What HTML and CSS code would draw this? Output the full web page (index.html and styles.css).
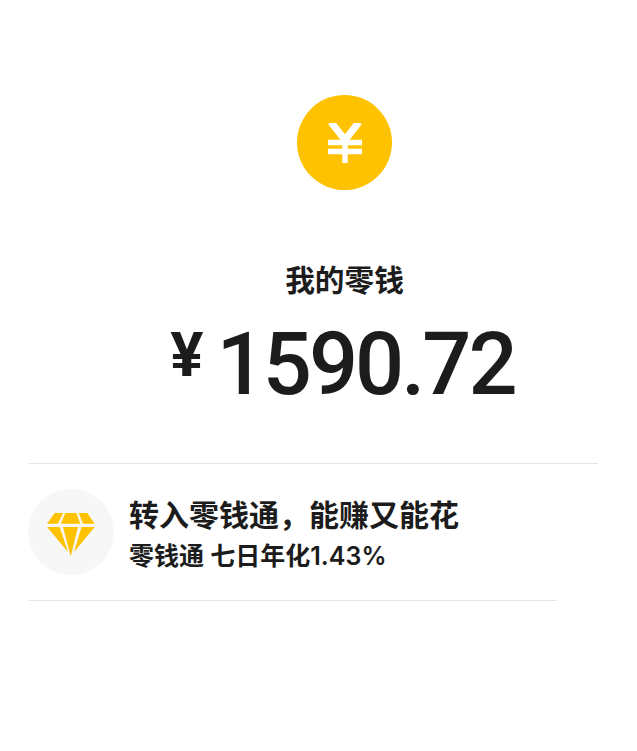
FILE: index.html
```html
<!DOCTYPE html>
<html lang="zh-CN">
<head>
    <meta charset="UTF-8">
    <meta name="viewport" content="width=device-width, initial-scale=1.0">
    <title>我的零钱</title>
    <link rel="stylesheet" href="styles.css">
</head>
<body>
    <div class="hero">
        <div class="coin">
            <svg width="34" height="40" viewBox="0 0 34 40">
                <path class="coin-arms" d="M3 -1 L17 17 L31 -1"/>
                <path class="coin-bars" d="M0 19.500 H34 M0 28.500 H34 M17 16 V40"/>
            </svg>
        </div>
        <h1 class="balance-title">我的零钱</h1>
        <div class="balance">
            <span class="currency">¥</span>
            <span class="amount">1590.72</span>
        </div>
    </div>

    <div class="promo">
        <div class="promo-icon">
            <svg class="gem-icon" width="48" height="44" viewBox="0 0 48 44">
                <path class="gem" d="M7.700 0 H16 L11 10.700 H0 Z"/>
                <path class="gem" d="M18.300 0 H29.300 L33.300 10.700 H13.700 Z"/>
                <path class="gem" d="M31.700 0 H40.300 L47.700 10.700 H36 Z"/>
                <path class="gem" d="M0 14 H12.700 L21 39 Z"/>
                <path class="gem" d="M16 14 H31 L23.700 43.500 Z"/>
                <path class="gem" d="M34.500 14 H47.700 L27 39 Z"/>
            </svg>
        </div>
        <div class="promo-text">
            <div class="promo-title">转入零钱通，能赚又能花</div>
            <div class="promo-sub">零钱通 七日年化1.43%</div>
        </div>
    </div>
</body>
</html>
```

FILE: styles.css
```css
body {
    margin: 0;
    background-color: #fff;
    color: #1c1c1c;
    font-family: "Noto Sans CJK SC", "Liberation Sans", sans-serif;
}

.hero {
    display: flex;
    flex-direction: column;
    align-items: center;
    box-sizing: border-box;
    width: 570px;
    height: 464px;
    margin-left: 28px;
    padding: 95px 0 0 63px;
    border-bottom: 1px solid #e6e6e6;
}

.coin {
    display: flex;
    justify-content: center;
    align-items: center;
    width: 95px;
    height: 95px;
    border-radius: 50%;
    background-color: #fec200;
}

.coin-arms {
    fill: none;
    stroke: #fff;
    stroke-width: 7;
}

.coin-bars {
    fill: none;
    stroke: #fff;
    stroke-width: 5.500;
}

.balance-title {
    margin: 67px 0 0;
    font-size: 29.700px;
    line-height: 44px;
    font-weight: 700;
}

.balance {
    display: flex;
    align-items: flex-start;
    margin: 12px 4px 0 0;
}

.currency {
    margin: 4px 13px 0 0;
    font-family: Roboto, sans-serif;
    font-size: 62px;
    line-height: 76px;
    font-weight: 700;
}

.amount {
    font-family: Roboto, sans-serif;
    font-size: 86.500px;
    line-height: 104px;
    font-weight: 500;
    letter-spacing: -3px;
}

.promo {
    display: flex;
    align-items: center;
    gap: 15px;
    box-sizing: border-box;
    width: 529px;
    height: 137px;
    margin-left: 28px;
    border-bottom: 1px solid #e6e6e6;
}

.promo-icon {
    display: flex;
    justify-content: center;
    align-items: center;
    width: 86px;
    height: 86px;
    border-radius: 50%;
    background-color: #f7f7f7;
}

.gem-icon {
    margin-top: 6px;
}

.gem {
    fill: #fec200;
}

.promo-title {
    font-size: 30px;
    line-height: 44px;
    font-weight: 700;
}

.promo-sub {
    margin-top: 3px;
    font-family: Inter, "Noto Sans CJK SC", sans-serif;
    font-size: 25px;
    line-height: 36px;
    font-weight: 600;
}
```
